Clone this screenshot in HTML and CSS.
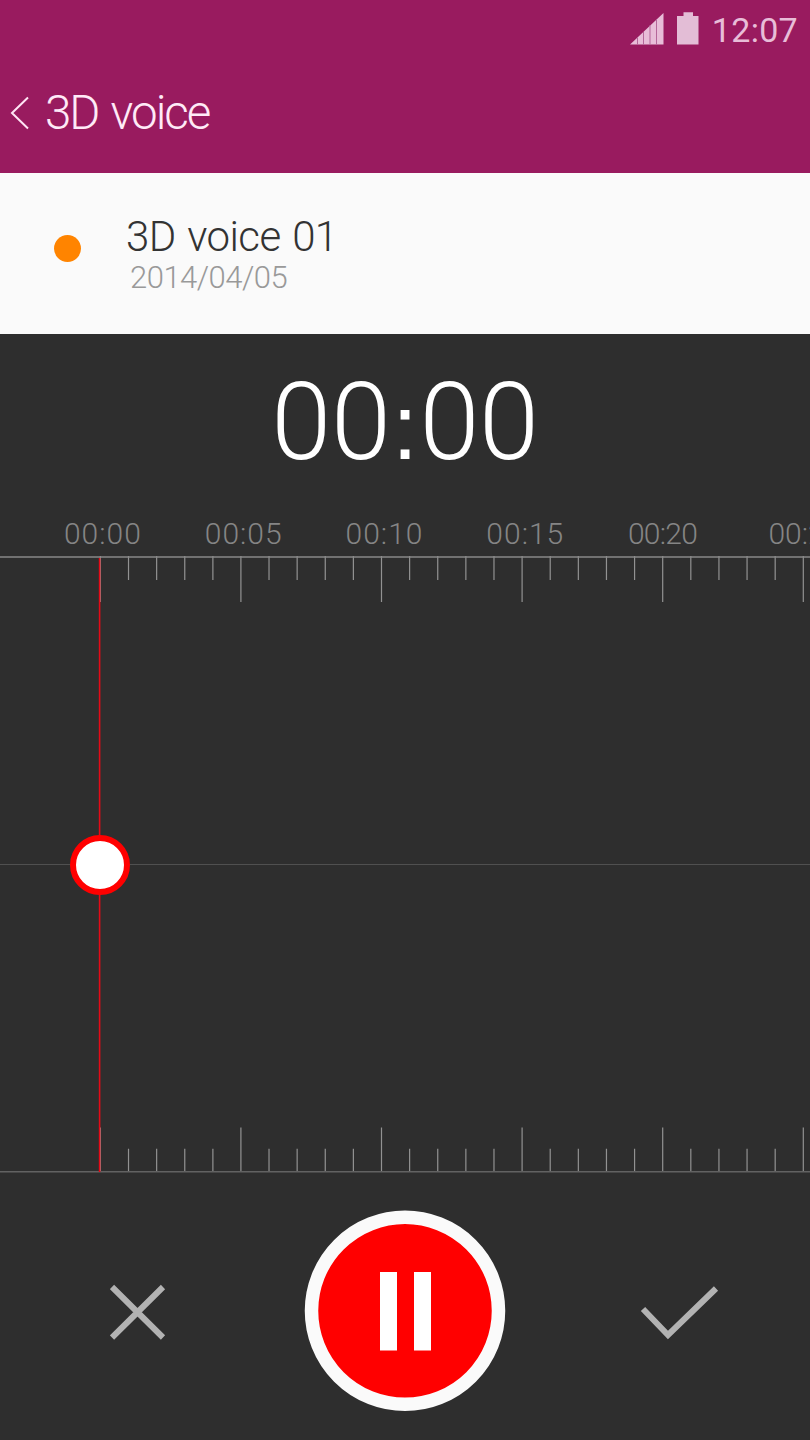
FILE: index.html
```html
<!DOCTYPE html>
<html lang="en">
<head>
<meta charset="utf-8">
<title>3D voice</title>
<link rel="stylesheet" href="styles.css">
</head>
<body>
<main class="app">
  <header class="header">
    <div class="status">
      <svg class="status-icons" width="72" height="36" viewBox="0 0 72 36">
        <path d="M1 33.500L34.500 2V33.500Z" fill="#e8bdd8"/>
        <path d="M8.500 26.500V34M14.500 21V34M21 14V34M27.500 8V34" stroke="#b5679a" stroke-width="1"/>
        <path d="M48 5H54.500V1.200H64V5H69.500V33.500H48Z" fill="#e3bdd6"/>
      </svg>
      <span class="clock">12:07</span>
    </div>
    <div class="nav">
      <svg class="back" width="20" height="34" viewBox="0 0 20 34"><path d="M18 1.500L2 17L18 32.500" fill="none" stroke="#ffe6f5" stroke-width="2"/></svg>
      <h1 class="title">3D voice</h1>
    </div>
  </header>
  <section class="recording">
    <span class="dot"></span>
    <div class="info">
      <h2 class="name">3D voice 01</h2>
      <p class="date">2014/04/05</p>
    </div>
  </section>
  <section class="counter"><span class="digits">00<span class="colon">:</span>00</span></section>
  <div class="labels">
    <span>00:00</span><span>00:05</span><span>00:10</span><span>00:15</span><span class="narrow">00:20</span><span class="narrow last">00:25</span>
  </div>
  <svg class="timeline" width="810" height="618" viewBox="0 0 810 618">
    <defs>
      <g id="ticks" stroke="#929292" stroke-width="1.200">
        <path d="M0 0V46M28.120 0V24M56.240 0V24M84.360 0V24M112.480 0V24"/>
      </g>
      <g id="ruler">
        <use href="#ticks" x="100.400"/><use href="#ticks" x="240.900"/><use href="#ticks" x="381.500"/><use href="#ticks" x="522.100"/><use href="#ticks" x="662.700"/><use href="#ticks" x="803.300"/>
      </g>
    </defs>
    <use href="#ruler"/>
    <use href="#ruler" transform="translate(0 616) scale(1 -.97)"/>
    <path d="M0 1H810" stroke="#888" stroke-width="1.500"/>
    <path d="M0 308.500H810" stroke="#505050"/>
    <path d="M0 615.700H810" stroke="#626262" stroke-width="1.500"/>
    <path d="M99.600 2V616" stroke="#e60a17" stroke-width="1.600"/>
    <circle cx="100" cy="309" r="27" fill="#fff" stroke="#f00" stroke-width="6"/>
  </svg>
  <footer class="controls">
    <svg class="cancel" width="56" height="56" viewBox="0 0 56 56"><path d="M2 3L53 53.500M53 3L2 53.500" stroke="#b2b2b2" stroke-width="6"/></svg>
    <svg class="pause" width="202" height="202" viewBox="0 0 202 202">
      <circle cx="101" cy="100.800" r="93.500" fill="#f00" stroke="#fafafa" stroke-width="13.500"/>
      <path d="M76 62H93V140.500H76ZM110 62H127V140.500H110Z" fill="#fff"/>
    </svg>
    <svg class="confirm" width="80" height="56" viewBox="0 0 80 56"><path d="M3 25L28 51L76 4.500" fill="none" stroke="#b2b2b2" stroke-width="6"/></svg>
  </footer>
</main>
</body>
</html>
```
FILE: styles.css
```css
* { box-sizing: border-box; }
body { margin: 0; background: #2e2e2e; font-family: Roboto, "Liberation Sans", sans-serif; font-weight: 300; }
h1, h2, p { margin: 0; font-weight: 300; white-space: nowrap; }
svg { display: block; flex: none; }
.app { width: 810px; height: 1440px; overflow: hidden; display: flex; flex-direction: column; }
.header { height: 172.500px; flex: none; background: #991b5f; color: #ffeaf7; }
.status { height: 60px; padding: 11px 12px 0 629px; display: flex; justify-content: space-between; }
.clock { margin-top: -1px; font-size: 34px; line-height: 40px; font-weight: 400; color: #e8bdd8; letter-spacing: .3px; }
.nav { display: flex; padding: 22px 0 0 10px; }
.back { margin-top: 14px; }
.title { margin-left: 15px; font-size: 47.500px; line-height: 62px; letter-spacing: -2px; word-spacing: 2.500px; }
.recording { height: 161px; flex: none; background: #fafafa; display: flex; padding: 38px 0 0 54px; }
.dot { width: 27px; height: 27px; margin-top: 24.500px; border-radius: 50%; background: #ff8400; }
.info { margin-left: 45px; }
.name { color: #333; font-size: 42px; line-height: 52px; letter-spacing: -.6px; word-spacing: 2px; }
.date { padding-left: 4px; color: #999; font-size: 31px; line-height: 30px; letter-spacing: -.5px; }
.counter { height: 180px; flex: none; text-align: center; color: #fff; font-size: 108px; line-height: 176px; }
.digits { display: inline-block; letter-spacing: -.3px; }
.colon { display: inline-block; width: 29px; font-family: "Liberation Sans", sans-serif; font-size: 92px; line-height: 1; }
.labels { height: 42.500px; flex: none; padding-left: 32.500px; display: grid; grid-template-columns: repeat(6, 140.800px); font-size: 30px; line-height: 40px; color: #858585; text-align: center; letter-spacing: 1px; }
.narrow { margin-left: -7px; letter-spacing: -.7px; }
.last { margin-left: -4px; letter-spacing: 0; }
.timeline { flex: none; }
.controls { flex: none; height: 266px; display: flex; padding: 36px 0 0 110px; }
.cancel { margin-top: 74px; }
.pause { margin-left: 138px; }
.confirm { margin: 74px 0 0 134px; }
```
